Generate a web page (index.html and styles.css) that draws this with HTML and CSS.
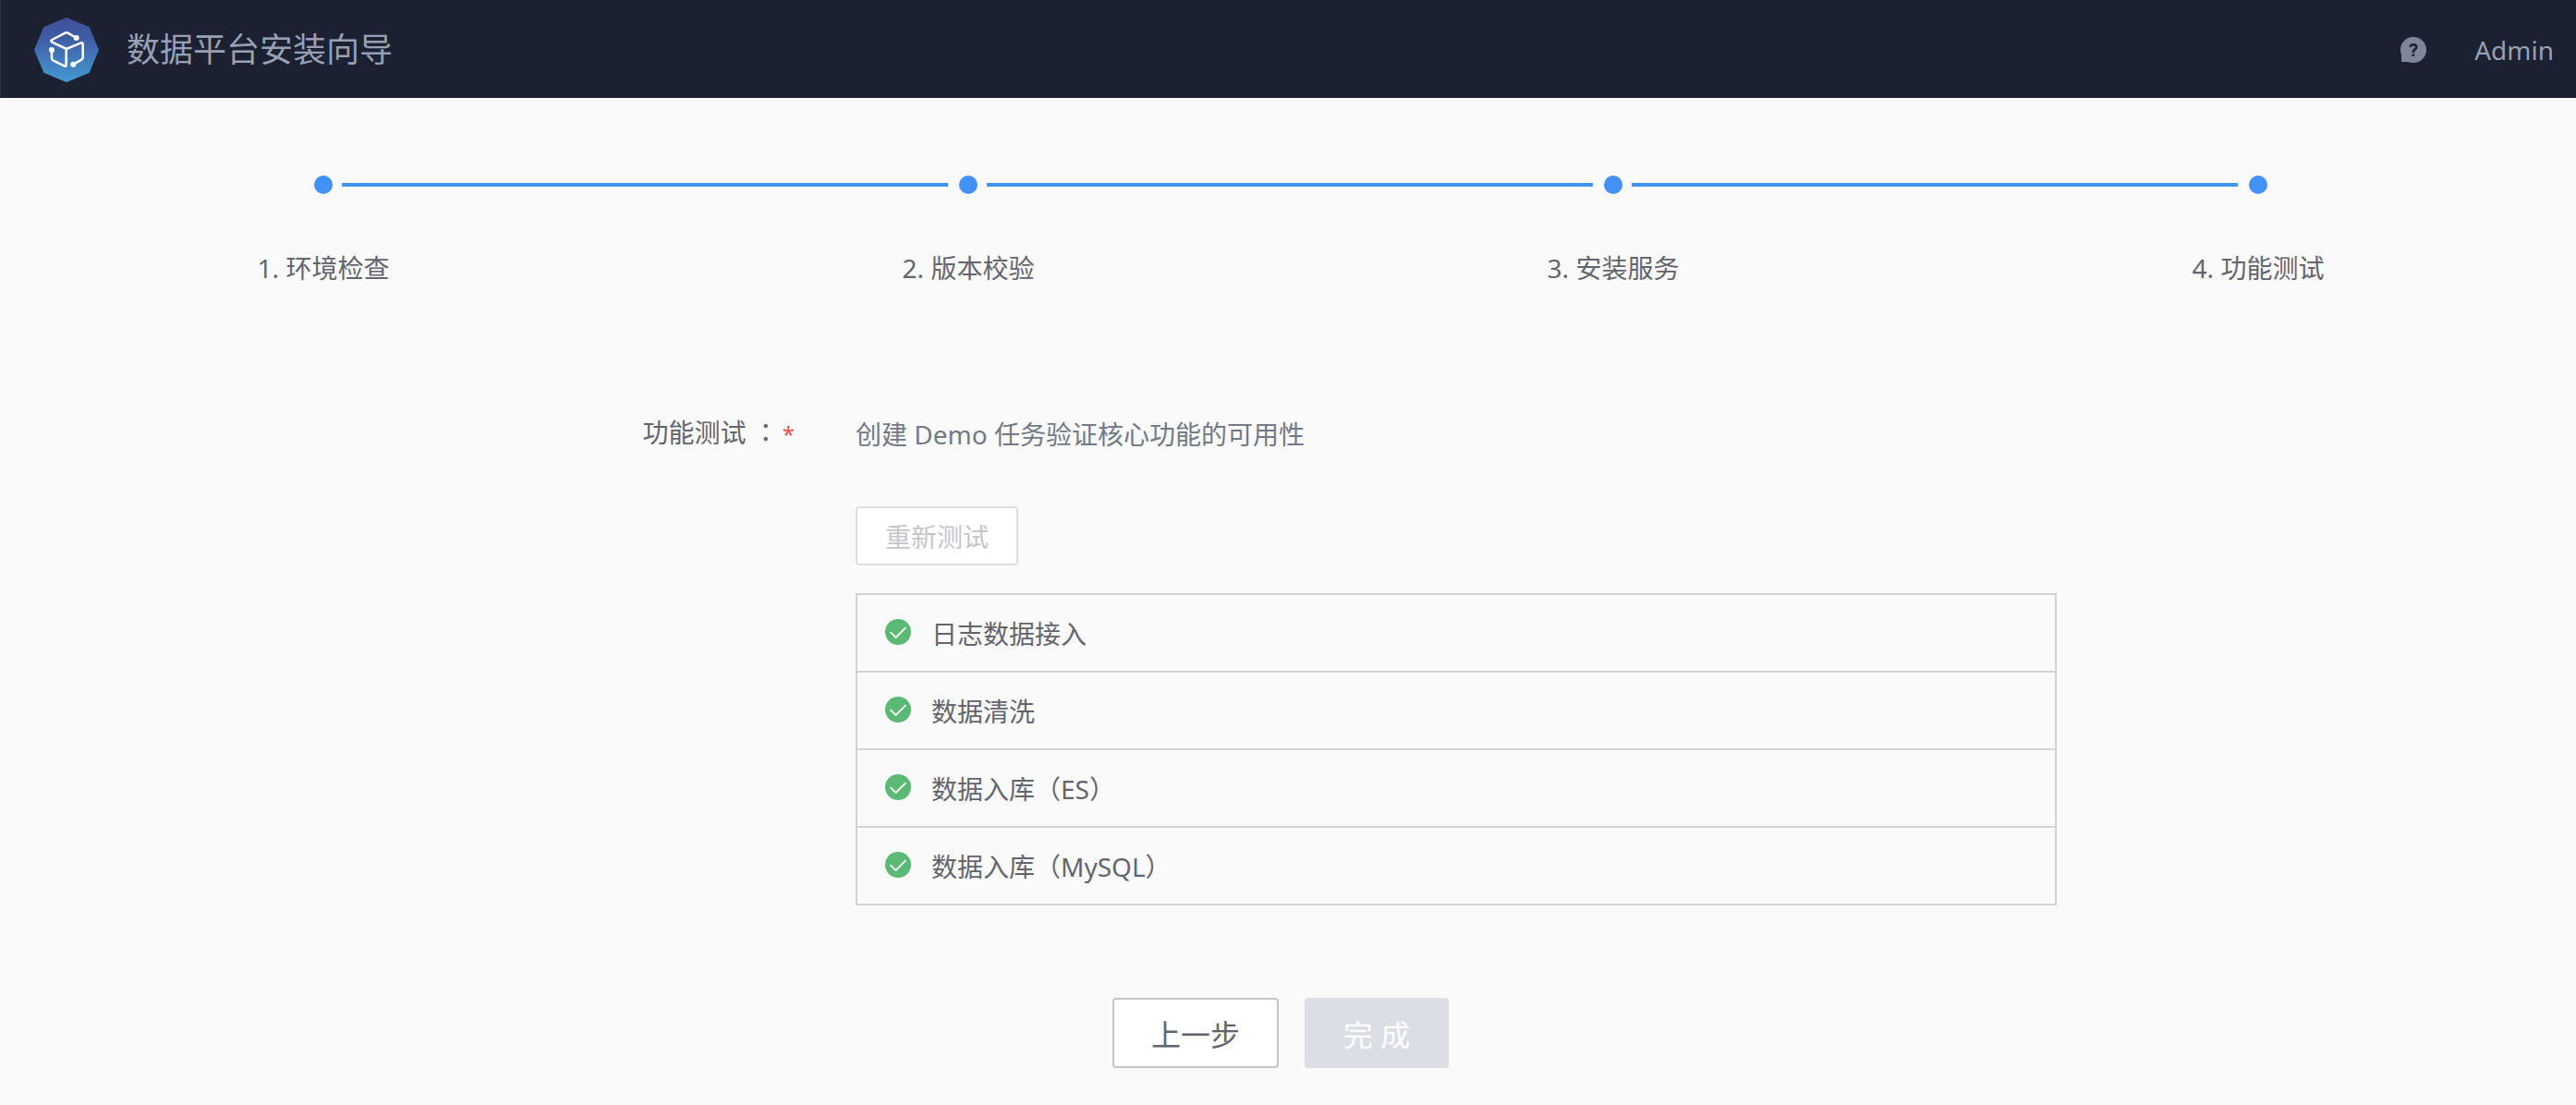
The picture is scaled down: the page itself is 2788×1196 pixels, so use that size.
FILE: index.html
```html
<!DOCTYPE html>
<html lang="zh-CN">
<head>
<meta charset="utf-8">
<meta name="viewport" content="width=device-width, initial-scale=1">
<title>数据平台安装向导</title>
<link rel="stylesheet" href="styles.css">
</head>
<body>
<svg class="sprite" aria-hidden="true">
  <symbol id="icon-check" viewBox="0 0 28 28">
    <circle cx="14" cy="14" r="14" fill="#5ab974"/>
    <path d="M5.6 14.2 L11.6 20 L22.4 9.2" fill="none" stroke="#fff" stroke-width="1.8"/>
  </symbol>
</svg>

<header class="topbar">
  <svg class="logo" viewBox="111 57 210 210" aria-hidden="true">
    <defs>
      <linearGradient id="logo-fill" x1="0" y1="0" x2="0" y2="1">
        <stop offset="0" stop-color="#41509b"/>
        <stop offset=".3" stop-color="#3f5ba5"/>
        <stop offset="1" stop-color="#439bd1"/>
      </linearGradient>
    </defs>
    <path fill="url(#logo-fill)" d="M216 57 L290 88 L321 162 L290 236 L216 267 L142 236 L111 162 L142 88 Z"/>
    <g fill="none" stroke="#fff" stroke-width="7.5" stroke-linejoin="round" stroke-linecap="round">
      <path d="M248 123 L220 107 Q216 105 212 107 L169 129 Q163 133 169 137 L216 159 L263 139 Q269 137 269 143 L269 187 Q269 192 265 194 L238 209"/>
      <path d="M168 161 L168 190 Q168 194 172 196 L209 214 Q215 217 215 211 L215 159"/>
    </g>
    <g fill="#fff">
      <circle cx="248" cy="123" r="9"/>
      <circle cx="168" cy="162" r="9"/>
      <circle cx="238" cy="209" r="9"/>
    </g>
  </svg>
  <h1 class="title">数据平台安装向导</h1>
  <a class="help" href="#" aria-label="帮助">
    <svg viewBox="0 0 28 28" aria-hidden="true">
      <path fill="#7e869c" d="M14 0 A14 14 0 1 1 14 28 Q10.500 28 8 27 L1 27 L1 19 Q0 17 0 14 A14 14 0 0 1 14 0 Z"/>
      <path fill="none" stroke="#1b2130" stroke-width="2.6" d="M10.600 10.800 Q10.800 8.200 14 8.200 Q17.200 8.300 17.200 10.900 Q17.200 12.500 15.400 13.600 Q13.800 14.600 13.800 17"/>
      <circle cx="13.800" cy="19.600" r="1.500" fill="#1b2130"/>
    </svg>
  </a>
  <a class="user" href="#">Admin</a>
</header>

<main>
  <ol class="steps">
    <li class="step"><span class="rail"></span><span class="step-name">1. 环境检查</span></li>
    <li class="step"><span class="rail"></span><span class="step-name">2. 版本校验</span></li>
    <li class="step"><span class="rail"></span><span class="step-name">3. 安装服务</span></li>
    <li class="step"><span class="rail"></span><span class="step-name">4. 功能测试</span></li>
  </ol>

  <section class="field">
    <h2 class="field-label">功能测试 <span class="colon" lang="zh-TW">：</span><span class="required">*</span></h2>
    <div class="field-body">
      <p class="hint">创建 Demo 任务验证核心功能的可用性</p>
      <button class="btn-retest" type="button" disabled>重新测试</button>
      <ul class="results">
        <li><svg class="check" aria-hidden="true"><use href="#icon-check"/></svg>日志数据接入</li>
        <li><svg class="check" aria-hidden="true"><use href="#icon-check"/></svg>数据清洗</li>
        <li><svg class="check" aria-hidden="true"><use href="#icon-check"/></svg>数据入库（ES）</li>
        <li><svg class="check" aria-hidden="true"><use href="#icon-check"/></svg>数据入库（MySQL）</li>
      </ul>
    </div>
  </section>

  <div class="actions">
    <button class="btn" type="button">上一步</button>
    <button class="btn btn-done" type="button" disabled>完 成</button>
  </div>
</main>
</body>
</html>
```
FILE: styles.css
```css
* {
  box-sizing: border-box;
}

body {
  margin: 0;
  background: #fafafa;
  color: #63656e;
  font: 28px/40px "Noto Sans", "Noto Sans CJK SC", sans-serif;
}

h1, h2, p, ol, ul {
  margin: 0;
  padding: 0;
  font-size: inherit;
  font-weight: 400;
  list-style: none;
}

button {
  font-family: inherit;
  padding: 0;
}

.sprite {
  display: none;
}

/* Top bar */
.topbar {
  display: flex;
  align-items: center;
  height: 106px;
  padding: 2px 24px 0 36px;
  border-left: 1px solid #2b3242;
  background: #1b2130;
  color: #979fb5;
}

.logo {
  width: 70px;
  height: 70px;
  margin-right: 30px;
}

.title {
  font-size: 36px;
  line-height: 48px;
}

.help {
  width: 28px;
  height: 28px;
  margin: 0 52px 0 auto;
}

.help svg {
  display: block;
}

.user {
  color: inherit;
  text-decoration: none;
}

/* Steps */
.steps {
  display: flex;
  padding: 84px 194px 0 200px;
}

.step {
  flex: 1;
}

.step:last-child {
  flex: 0 0 300px;
}

.rail {
  display: flex;
  align-items: center;
  gap: 10px;
  margin: 0 -128px 60px 140px;
}

.rail::before {
  content: "";
  width: 20px;
  height: 20px;
  border-radius: 50%;
  background: #4191f7;
}

.step:not(:last-child) .rail::after {
  content: "";
  flex: 1;
  height: 4px;
  background: #4191f0;
}

.step-name {
  display: block;
  width: 300px;
  text-align: center;
}

/* Test section */
.field {
  display: flex;
  padding: 138px 0 0;
}

.field-label {
  flex: 0 0 860px;
  margin-right: 66px;
  text-align: right;
}

.colon {
  font-family: "Noto Sans CJK TC", sans-serif;
  line-height: 1;
}

.required {
  margin-left: 4px;
  color: #ea5048;
  font-size: 24px;
  line-height: 1;
}

.field-body {
  flex: 0 1 1300px;
}

.hint {
  padding-top: 2px;
  color: #737987;
}

.btn-retest {
  width: 176px;
  height: 64px;
  margin: 58px 0 30px;
  border: 2px solid #dcdee5;
  border-radius: 4px;
  background: #fff;
  color: #c4c6cc;
  font-size: 28px;
  display: block;
}

.results {
  border: 2px solid #d3d3d3;
}

.results li {
  display: flex;
  align-items: center;
  gap: 22px;
  height: 82px;
  padding: 2px 0 0 30px;
}

.results li + li {
  height: 84px;
  border-top: 2px solid #d3d3d3;
}

.check {
  width: 28px;
  height: 28px;
  margin-bottom: 4px;
}

/* Footer buttons */
.actions {
  display: flex;
  justify-content: center;
  gap: 28px;
  padding: 100px 16px 40px 0;
}

.btn {
  width: 180px;
  height: 76px;
  border: 2px solid #c4c6cc;
  border-radius: 4px;
  background: #fff;
  color: #63656e;
  font-size: 32px;
}

.btn-done {
  width: 156px;
  border-color: #dcdee5;
  background: #dcdee5;
  color: #fff;
}
```
